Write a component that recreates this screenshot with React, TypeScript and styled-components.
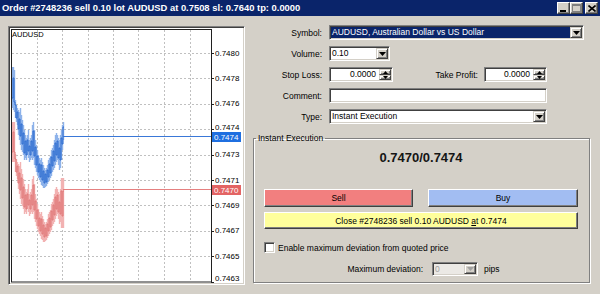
import React from 'react';
import styled, { createGlobalStyle } from 'styled-components';

const GlobalStyle = createGlobalStyle`
  * { box-sizing: border-box; }
  html, body { margin: 0; padding: 0; background: #d4d0c8; }
  body {
    font-family: "Liberation Sans", Arial, sans-serif;
    font-size: 8.5px;
    color: #000;
  }
`;

const Window = styled.div`
  width: 600px;
  height: 294px;
  background: #d4d0c8;
  display: flex;
  flex-direction: column;
  overflow: hidden;
`;

const TitleBar = styled.div`
  height: 16px;
  background: #0a246a;
  display: flex;
  align-items: center;
  padding: 0 2px;
`;

const Title = styled.div`
  flex: 1;
  color: #fff;
  font-weight: bold;
  font-size: 9.4px;
  line-height: 16px;
  white-space: nowrap;
`;

const CaptionButton = styled.div<{ $gap?: number }>`
  width: 13px;
  height: 12px;
  margin-left: ${p => p.$gap ?? 0}px;
  background: #d4d0c8;
  border: 1px solid;
  border-color: #fff #404040 #404040 #fff;
  box-shadow: inset -1px -1px #808080;
  display: flex;
  align-items: center;
  justify-content: center;
`;

const Body = styled.div`
  flex: 1;
  display: flex;
  gap: 8px;
  padding: 9px 0 0 8px;
`;

const ChartPanel = styled.div`
  margin-top: 1px;
  width: 237px;
  height: 259px;
  padding: 1px;
  background: #fff;
  border: 1px solid;
  border-color: #808080 #fff #fff #808080;
  box-shadow: inset 1px 1px #404040, inset -1px -1px #d4d0c8;

  svg { display: block; }
`;

const Side = styled.div`
  width: 337px;
  display: flex;
  flex-direction: column;
`;

const Form = styled.div`
  display: flex;
  flex-direction: column;
  gap: 6px;
`;

const Row = styled.div`
  height: 15px;
  display: flex;
  align-items: center;
`;

const Label = styled.div<{ $w: number; $mr: number }>`
  width: ${p => p.$w}px;
  margin-right: ${p => p.$mr}px;
  text-align: right;
  white-space: nowrap;
`;

const Field = styled.div<{ $w: number; $h?: number; $disabled?: boolean }>`
  width: ${p => p.$w}px;
  height: ${p => p.$h ?? 15}px;
  padding: 1px;
  display: flex;
  background: ${p => (p.$disabled ? '#ebe9e5' : '#fff')};
  border: 1px solid;
  border-color: #808080 #fff #fff #808080;
  box-shadow: inset 1px 1px #404040, inset -1px -1px #d4d0c8;
`;

const FieldText = styled.div<{ $selected?: boolean; $right?: boolean; $disabled?: boolean }>`
  flex: 1;
  padding: 0 ${p => (p.$right ? 3 : 1)}px 0 1px;
  line-height: 11px;
  white-space: nowrap;
  overflow: hidden;
  text-align: ${p => (p.$right ? 'right' : 'left')};
  background: ${p => (p.$selected ? '#0a246a' : 'transparent')};
  color: ${p => (p.$selected ? '#fff' : p.$disabled ? '#a0a0a0' : '#000')};
`;

const SmallButton = styled.div<{ $h?: number }>`
  width: 12px;
  height: ${p => (p.$h ? `${p.$h}px` : 'auto')};
  background: #d4d0c8;
  border: 1px solid;
  border-color: #d4d0c8 #404040 #404040 #d4d0c8;
  box-shadow: inset 1px 1px #fff, inset -1px -1px #808080;
  display: flex;
  align-items: center;
  justify-content: center;
`;

const SpinColumn = styled.div`
  display: flex;
  flex-direction: column;
`;

const Group = styled.fieldset`
  margin: 9px 0 0;
  padding: 0 11px 6px 10px;
  width: 337px;
  min-width: 0;
  display: flex;
  flex-direction: column;
  border: 1px solid #808080;
  box-shadow: inset 1px 1px #fff, 1px 1px #fff;
`;

const Legend = styled.legend`
  margin-left: -8px;
  padding: 0 2px;
  line-height: 10px;
`;

const Quote = styled.div`
  margin-top: 7px;
  font-size: 13px;
  font-weight: bold;
  line-height: 16px;
  text-align: center;
  color: #151515;
`;

const ButtonRow = styled.div`
  margin-top: 23px;
  display: flex;
  justify-content: space-between;
`;

const TradeButton = styled.div<{ $bg: string; $w?: number; $h: number; $mt?: number }>`
  width: ${p => (p.$w ? `${p.$w}px` : '100%')};
  height: ${p => p.$h}px;
  margin-top: ${p => p.$mt ?? 0}px;
  background: ${p => p.$bg};
  border: 1px solid;
  border-color: #fff #404040 #404040 #fff;
  box-shadow: inset -1px -1px #808080;
  display: flex;
  align-items: center;
  justify-content: center;
  white-space: nowrap;
`;

const CheckRow = styled.div`
  margin-top: 13px;
  height: 11px;
  display: flex;
  align-items: center;
`;

const CheckBox = styled.div`
  width: 11px;
  height: 11px;
  margin-right: 3px;
  background: #fff;
  border: 1px solid;
  border-color: #808080 #fff #fff #808080;
  box-shadow: inset 1px 1px #404040, inset -1px -1px #d4d0c8;
`;

const DevRow = styled.div`
  margin-top: 9px;
  height: 14px;
  display: flex;
  align-items: center;
`;

const Pips = styled.div`
  margin-left: 6px;
`;

const Arrow = ({ color = '#000' }: { color?: string }) => (
  <svg width="7" height="4" viewBox="0 0 7 4">
    <polygon points="0,0 7,0 3.5,4" fill={color} />
  </svg>
);

const SpinArrow = ({ up }: { up?: boolean }) => (
  <svg width="5" height="3" viewBox="0 0 5 3">
    <polygon points={up ? '0,3 5,3 2.5,0' : '0,0 5,0 2.5,3'} fill="#000" />
  </svg>
);

const Combo = ({ w, text, selected }: { w: number; text: string; selected?: boolean }) => (
  <Field $w={w}>
    <FieldText $selected={selected}>{text}</FieldText>
    <SmallButton>
      <Arrow />
    </SmallButton>
  </Field>
);

const Spinner = ({ w, value }: { w: number; value: string }) => (
  <Field $w={w}>
    <FieldText $right>{value}</FieldText>
    <SpinColumn>
      <SmallButton $h={6}>
        <SpinArrow up />
      </SmallButton>
      <SmallButton $h={5}>
        <SpinArrow />
      </SmallButton>
    </SpinColumn>
  </Field>
);

// ask side tick columns: [x, top, bottom]
const ASK: [number, number, number][] = [
  [12, 67, 108], [13, 67, 110], [14, 70, 112], [15, 100, 118], [16, 105, 122],
  [17, 108, 125], [18, 110, 135], [19, 112, 140], [20, 108, 145], [21, 115, 150],
  [22, 120, 152], [23, 125, 155], [24, 130, 160], [25, 135, 158], [26, 138, 160],
  [27, 135, 155], [28, 130, 158], [29, 140, 162], [30, 138, 160], [31, 135, 158],
  [32, 125, 160], [33, 122, 158], [34, 130, 165], [35, 140, 168], [36, 145, 172],
  [37, 150, 175], [38, 155, 178], [39, 158, 180], [40, 160, 182], [41, 158, 185],
  [42, 162, 186], [43, 165, 188], [44, 168, 188], [45, 170, 187], [46, 168, 186],
  [47, 165, 184], [48, 160, 182], [49, 158, 180], [50, 156, 178], [51, 150, 176],
  [52, 148, 172], [53, 145, 170], [54, 140, 168], [55, 135, 165], [56, 133, 162],
  [57, 135, 160], [58, 138, 165], [59, 140, 170], [60, 135, 168], [61, 130, 160],
  [62, 125, 150], [63, 122, 140],
];

const BID: [number, number, number][] = ASK.map(([x, t, b]) => {
  if (x >= 61) return [x, 178, 228];
  if (x <= 14) return [x, 122, 162];
  return [x, t + 54, b + 54];
});

const LEVELS = ['0.7480', '0.7478', '0.7476', '0.7474', '0.7473', '0.7471', '0.7469', '0.7467', '0.7465', '0.7463'];
const GRID_X = [37, 62, 88, 113, 138, 164, 190];
const levelY = (i: number) => (i === LEVELS.length - 1 ? 278 : i === 3 ? 127 : 53 + 25.4 * i);
const gridY = (i: number) => Math.round(53 + 25.4 * i) + 0.5;

const Ticks = ({ cols, light, dark }: { cols: [number, number, number][]; light: string; dark: string }) => {
  const bars = cols.map(([x, t, b]) => `M${x + 0.5} ${t}V${b}`).join('');
  const steps = cols
    .map(([x, t, b], i) => {
      const a = Math.round(t + (b - t) * 0.25);
      const c = Math.round(b - (b - t) * 0.25);
      const y = i % 2 ? a : c;
      return `${i ? 'V' : `M${x} `}${y}H${x + 1}`;
    })
    .join('');
  return (
    <g>
      <path d={bars} stroke={light} strokeWidth={1.4} fill="none" />
      <path d={steps} stroke={dark} strokeWidth={1} fill="none" />
    </g>
  );
};

const Chart = () => (
  <svg width="233" height="255" viewBox="10 28 233 255" fontFamily="Liberation Sans, Arial, sans-serif">
    <rect x="10" y="28" width="233" height="255" fill="#fff" />
    {GRID_X.map(x => (
      <line key={x} x1={x + 0.5} y1={30} x2={x + 0.5} y2={282} stroke="#c0c0c0" strokeDasharray="2 2" />
    ))}
    {LEVELS.slice(0, -1).map((_, i) => (
      <line key={i} x1={12} y1={gridY(i)} x2={211} y2={gridY(i)} stroke="#c0c0c0" strokeDasharray="2 2" />
    ))}
    <Ticks cols={BID} light="#f2b2b2" dark="#e07878" />
    <Ticks cols={ASK} light="#8db2ea" dark="#2f6cd0" />
    <line x1={63} y1={189.5} x2={211} y2={189.5} stroke="#e58080" />
    <line x1={63} y1={136.5} x2={211} y2={136.5} stroke="#3a78d8" />
    <rect x="11.5" y="29.5" width="200" height="252.5" fill="none" stroke="#202020" />
    <text x="12" y="34" fontSize="7.5" dominantBaseline="central" fill="#000">AUDUSD</text>
    {LEVELS.map((lv, i) => (
      <g key={lv}>
        <line x1={211} y1={gridY(i)} x2={214} y2={gridY(i)} stroke="#202020" />
        <text x="215" y={levelY(i)} fontSize="8" dominantBaseline="central" fill="#000">{lv}</text>
      </g>
    ))}
    <rect x="212" y="132" width="29" height="10" fill="#1f6fe0" />
    <text x="214" y="137" fontSize="8" dominantBaseline="central" fill="#fff">0.7474</text>
    <rect x="212" y="185" width="29" height="10" fill="#e36464" />
    <text x="214" y="190" fontSize="8" dominantBaseline="central" fill="#fff">0.7470</text>
  </svg>
);

const App: React.FC = () => (
  <Window>
    <GlobalStyle />
    <TitleBar>
      <Title>Order #2748236 sell 0.10 lot AUDUSD at 0.7508 sl: 0.7640 tp: 0.0000</Title>
      <CaptionButton>
        <svg width="7" height="7" viewBox="0 0 7 7">
          <rect x="0" y="5" width="6" height="2" fill="#000" />
        </svg>
      </CaptionButton>
      <CaptionButton>
        <svg width="9" height="8" viewBox="0 0 9 8">
          <rect x="0.5" y="0.5" width="8" height="7" fill="none" stroke="#808080" />
          <rect x="0" y="1" width="9" height="1" fill="#808080" />
        </svg>
      </CaptionButton>
      <CaptionButton $gap={2}>
        <svg width="8" height="7" viewBox="0 0 8 7">
          <path d="M0.5 0.5L7.5 6.5M7.5 0.5L0.5 6.5" stroke="#000" strokeWidth="1.6" />
        </svg>
      </CaptionButton>
    </TitleBar>
    <Body>
      <ChartPanel>
        <Chart />
      </ChartPanel>
      <Side>
        <Form>
          <Row>
            <Label $w={69} $mr={7}>Symbol:</Label>
            <Combo w={255} text="AUDUSD, Australian Dollar vs US Dollar" selected />
          </Row>
          <Row>
            <Label $w={69} $mr={7}>Volume:</Label>
            <Combo w={61} text="0.10" />
          </Row>
          <Row>
            <Label $w={69} $mr={7}>Stop Loss:</Label>
            <Spinner w={64} value="0.0000" />
            <Label $w={85} $mr={6}>Take Profit:</Label>
            <Spinner w={63} value="0.0000" />
          </Row>
          <Row>
            <Label $w={69} $mr={7}>Comment:</Label>
            <Field $w={218} />
          </Row>
          <Row>
            <Label $w={69} $mr={7}>Type:</Label>
            <Combo w={218} text="Instant Execution" />
          </Row>
        </Form>
        <Group>
          <Legend>Instant Execution</Legend>
          <Quote>0.7470/0.7474</Quote>
          <ButtonRow>
            <TradeButton $bg="#f27f7f" $w={149} $h={18}>Sell</TradeButton>
            <TradeButton $bg="#a2bdf2" $w={150} $h={18}>Buy</TradeButton>
          </ButtonRow>
          <TradeButton $bg="#ffff9c" $h={17} $mt={5}>
            Close #2748236 sell 0.10 AUDUSD&nbsp;<u>a</u>t 0.7474
          </TradeButton>
          <CheckRow>
            <CheckBox />
            Enable maximum deviation from quoted price
          </CheckRow>
          <DevRow>
            <Label $w={159} $mr={9}>Maximum deviation:</Label>
            <Field $w={46} $h={14} $disabled>
              <FieldText $disabled>0</FieldText>
              <SmallButton>
                <Arrow color="#a0a0a0" />
              </SmallButton>
            </Field>
            <Pips>pips</Pips>
          </DevRow>
        </Group>
      </Side>
    </Body>
  </Window>
);

export default App;
